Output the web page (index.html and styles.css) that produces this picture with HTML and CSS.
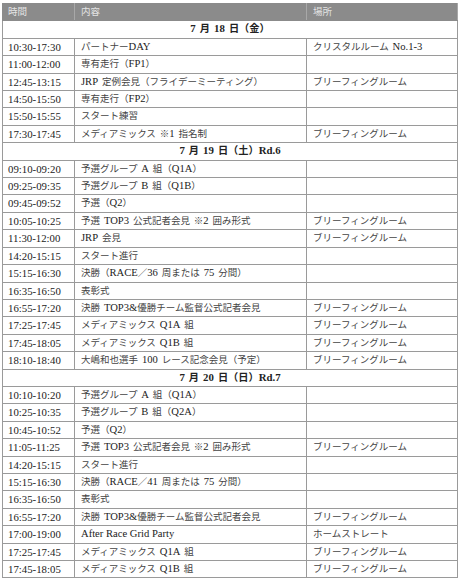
FILE: index.html
```html
<!DOCTYPE html>
<html lang="ja">
<head>
<meta charset="utf-8">
<link rel="stylesheet" href="styles.css">
</head>
<body>
<table class="schedule">
  <colgroup>
    <col class="c-time">
    <col class="c-item">
    <col class="c-place">
  </colgroup>
  <thead>
    <tr><th>時間</th><th>内容</th><th>場所</th></tr>
  </thead>
  <tbody>
    <tr class="day"><td colspan="3"><span class="en">7</span> 月 <span class="en">18</span> 日（金）</td></tr>
    <tr><td>10:30-17:30</td><td>パートナー<span class="en">DAY</span></td><td>クリスタルルーム <span class="en">No.1-3</span></td></tr>
    <tr><td>11:00-12:00</td><td>専有走行（<span class="en">FP1</span>）</td><td></td></tr>
    <tr><td>12:45-13:15</td><td><span class="en">JRP</span> 定例会見（フライデーミーティング）</td><td>ブリーフィングルーム</td></tr>
    <tr><td>14:50-15:50</td><td>専有走行（<span class="en">FP2</span>）</td><td></td></tr>
    <tr><td>15:50-15:55</td><td>スタート練習</td><td></td></tr>
    <tr><td>17:30-17:45</td><td>メディアミックス ※<span class="en">1</span> 指名制</td><td>ブリーフィングルーム</td></tr>
    <tr class="day"><td colspan="3"><span class="en">7</span> 月 <span class="en">19</span> 日（土）<span class="en">Rd.6</span></td></tr>
    <tr><td>09:10-09:20</td><td>予選グループ <span class="en">A</span> 組（<span class="en">Q1A</span>）</td><td></td></tr>
    <tr><td>09:25-09:35</td><td>予選グループ <span class="en">B</span> 組（<span class="en">Q1B</span>）</td><td></td></tr>
    <tr><td>09:45-09:52</td><td>予選（<span class="en">Q2</span>）</td><td></td></tr>
    <tr><td>10:05-10:25</td><td>予選 <span class="en">TOP3</span> 公式記者会見 ※<span class="en">2</span> 囲み形式</td><td>ブリーフィングルーム</td></tr>
    <tr><td>11:30-12:00</td><td><span class="en">JRP</span> 会見</td><td>ブリーフィングルーム</td></tr>
    <tr><td>14:20-15:15</td><td>スタート進行</td><td></td></tr>
    <tr><td>15:15-16:30</td><td>決勝（<span class="en">RACE</span>／<span class="en">36</span> 周または <span class="en">75</span> 分間）</td><td></td></tr>
    <tr><td>16:35-16:50</td><td>表彰式</td><td></td></tr>
    <tr><td>16:55-17:20</td><td>決勝 <span class="en">TOP3&amp;</span>優勝チーム監督公式記者会見</td><td>ブリーフィングルーム</td></tr>
    <tr><td>17:25-17:45</td><td>メディアミックス <span class="en">Q1A</span> 組</td><td>ブリーフィングルーム</td></tr>
    <tr><td>17:45-18:05</td><td>メディアミックス <span class="en">Q1B</span> 組</td><td>ブリーフィングルーム</td></tr>
    <tr><td>18:10-18:40</td><td>大嶋和也選手 <span class="en">100</span> レース記念会見（予定）</td><td>ブリーフィングルーム</td></tr>
    <tr class="day"><td colspan="3"><span class="en">7</span> 月 <span class="en">20</span> 日（日）<span class="en">Rd.7</span></td></tr>
    <tr><td>10:10-10:20</td><td>予選グループ <span class="en">A</span> 組（<span class="en">Q1A</span>）</td><td></td></tr>
    <tr><td>10:25-10:35</td><td>予選グループ <span class="en">B</span> 組（<span class="en">Q2A</span>）</td><td></td></tr>
    <tr><td>10:45-10:52</td><td>予選（<span class="en">Q2</span>）</td><td></td></tr>
    <tr><td>11:05-11:25</td><td>予選 <span class="en">TOP3</span> 公式記者会見 ※<span class="en">2</span> 囲み形式</td><td>ブリーフィングルーム</td></tr>
    <tr><td>14:20-15:15</td><td>スタート進行</td><td></td></tr>
    <tr><td>15:15-16:30</td><td>決勝（<span class="en">RACE</span>／<span class="en">41</span> 周または <span class="en">75</span> 分間）</td><td></td></tr>
    <tr><td>16:35-16:50</td><td>表彰式</td><td></td></tr>
    <tr><td>16:55-17:20</td><td>決勝 <span class="en">TOP3&amp;</span>優勝チーム監督公式記者会見</td><td>ブリーフィングルーム</td></tr>
    <tr><td>17:00-19:00</td><td><span class="en">After Race Grid Party</span></td><td>ホームストレート</td></tr>
    <tr><td>17:25-17:45</td><td>メディアミックス <span class="en">Q1A</span> 組</td><td>ブリーフィングルーム</td></tr>
    <tr><td>17:45-18:05</td><td>メディアミックス <span class="en">Q1B</span> 組</td><td>ブリーフィングルーム</td></tr>
  </tbody>
</table>
</body>
</html>
```
FILE: styles.css
```css
html, body {
  margin: 0;
  padding: 0;
  background: #ffffff;
}
body {
  padding: 3px 2px 0 2px;
  font-family: "Liberation Serif", "Noto Sans CJK JP", serif;
  font-size: 9.5px;
  color: #444444;
}
.schedule {
  width: 455px;
  border-collapse: collapse;
  table-layout: fixed;
}
.c-time { width: 72px; }
.c-item { width: 232px; }
.c-place { width: 151px; }
.schedule th,
.schedule td {
  border: 1px solid #9a9a9a;
  height: 16.4px;
  padding: 0 0 0 6px;
  text-align: left;
  vertical-align: middle;
  white-space: nowrap;
  overflow: hidden;
  line-height: 16.4px;
  font-weight: 400;
  word-spacing: 1.5px;
}
.schedule td:first-child {
  padding-left: 5px;
  font-size: 10.8px;
  color: #222222;
  word-spacing: 0;
}
.schedule th:first-child {
  padding-left: 5px;
}
.en {
  font-size: 10.6px;
  line-height: 1;
  color: #222222;
  word-spacing: 0;
}
.schedule th {
  background: #8b8b8b;
  color: #e4e4e4;
  border-color: #8b8b8b #a8a8a8 #8b8b8b #8b8b8b;
}
.schedule .day td {
  text-align: center;
  font-weight: 700;
  font-size: 10.2px;
  color: #222222;
  padding: 0;
  word-spacing: 1.5px;
}
.schedule .day .en {
  font-size: 10.8px;
}
```
